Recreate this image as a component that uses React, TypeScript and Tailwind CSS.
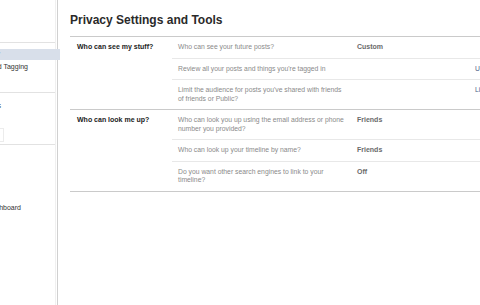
const sections = [
    {
        label: 'Who can see my stuff?',
        rows: [
            { q: 'Who can see your future posts?', v: 'Custom', a: '' },
            { q: "Review all your posts and things you're tagged in", v: '', a: 'Use Activity Log' },
            { q: "Limit the audience for posts you've shared with friends of friends or Public?", v: '', a: 'Limit Past Posts' },
        ],
    },
    {
        label: 'Who can look me up?',
        rows: [
            { q: 'Who can look you up using the email address or phone number you provided?', v: 'Friends', a: '' },
            { q: 'Who can look up your timeline by name?', v: 'Friends', a: '' },
            { q: 'Do you want other search engines to link to your timeline?', v: 'Off', a: '' },
        ],
    },
];

const App = () => {
    return (
        <div
            className="flex h-[305px] w-[480px] overflow-hidden bg-white text-[#333]"
            style={{ fontFamily: '"Liberation Sans", Arial, sans-serif' }}
        >
            {/* left nav, mostly cut off */}
            <div className="w-[58px] shrink-0 border-r border-[#d0d0d0]">
                <div className="h-full w-[56px] border-r border-[#f0f0f0] text-[7px]">
                    <div className="h-[43px] border-b border-[#e2e2e2]" />
                    <div className="h-[50px] border-b border-[#e2e2e2] pt-[6px]">
                        <div className="flex h-[11px] items-center justify-end whitespace-nowrap bg-[#d8dfea] pr-[60px]">
                            Privacy
                        </div>
                        <div className="flex h-[15px] items-center justify-end whitespace-nowrap pr-[27px]">
                            Timeline and Tagging
                        </div>
                    </div>
                    <div className="h-[52px] border-b border-[#e2e2e2] pt-[8px]">
                        <div className="flex h-[10px] items-center justify-end whitespace-nowrap pr-[54px]">
                            Notifications
                        </div>
                        <div className="mt-[17px] h-[14px] w-[4px] border border-l-0 border-[#ececec]" />
                    </div>
                    <div className="pt-[58px]">
                        <div className="flex h-[10px] items-center justify-end whitespace-nowrap pr-[34px]">
                            Support Dashboard
                        </div>
                    </div>
                </div>
            </div>

            <div className="min-w-0 flex-1 pl-[12px] pt-[13px]">
                <h1 className="whitespace-nowrap text-[12px] font-bold leading-[14px] text-[#2a2a2a]">
                    Privacy Settings and Tools
                </h1>
                <div className="mt-[9px] border-t border-[#cacaca]">
                    {sections.map(s => (
                        <div key={s.label} className="flex border-b border-[#cacaca]">
                            <div className="w-[102px] shrink-0 whitespace-nowrap pl-[7px] pt-[6px] text-[7px] font-bold leading-[8px] text-[#222]">
                                {s.label}
                            </div>
                            <div className="min-w-0 flex-1">
                                {s.rows.map((r, i) => (
                                    <div
                                        key={r.q}
                                        className={
                                            'flex py-[6px] text-[6.8px] leading-[8.5px] ' +
                                            (i < s.rows.length - 1 ? 'border-b border-[#e8e8e8]' : '')
                                        }
                                    >
                                        <div className="w-[185px] shrink-0 pl-[6px] pr-[9px] text-[#8a8a8a]">{r.q}</div>
                                        <div className="w-[118px] shrink-0 text-[7px] font-bold text-[#6a6a6a]">{r.v}</div>
                                        <div className="whitespace-nowrap text-[#4b5e86]">{r.a}</div>
                                    </div>
                                ))}
                            </div>
                        </div>
                    ))}
                </div>
            </div>
        </div>
    );
};

export default App;
